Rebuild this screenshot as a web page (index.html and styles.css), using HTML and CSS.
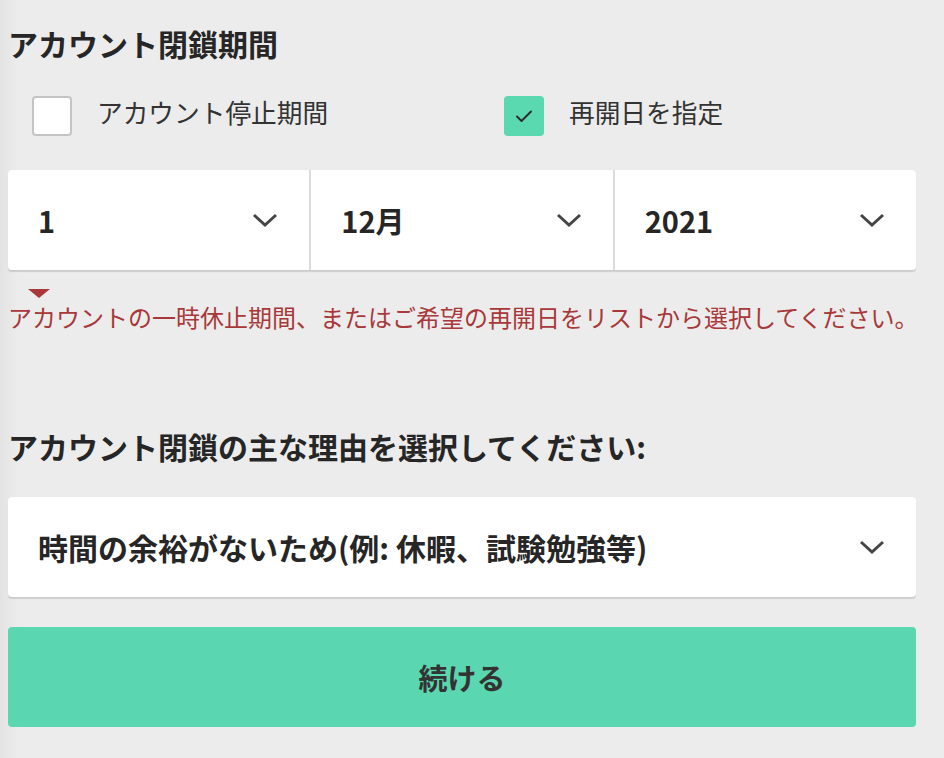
FILE: index.html
```html
<!DOCTYPE html>
<html lang="ja">
<head>
  <meta charset="UTF-8">
  <meta name="viewport" content="width=device-width, initial-scale=1.0">
  <title>アカウント閉鎖</title>
  <link rel="stylesheet" href="styles.css">
</head>
<body>
  <div class="page">
    <h2 class="heading">アカウント閉鎖期間</h2>

    <div class="check-row">
      <label class="check">
        <span class="box"></span>
        <span class="check-label">アカウント停止期間</span>
      </label>
      <label class="check">
        <span class="box checked">
          <svg width="18" height="14" viewBox="0 0 18 14"><path d="M2 7.5 L6.5 12 L16 2.5" fill="none" stroke="#2b2b2b" stroke-width="1.9" stroke-linecap="round" stroke-linejoin="round"/></svg>
        </span>
        <span class="check-label">再開日を指定</span>
      </label>
    </div>

    <div class="date-select">
      <div class="select-cell">
        <span class="value">1</span>
        <svg class="chevron" width="26" height="15" viewBox="0 0 26 15"><path d="M2 2 L13 12 L24 2" fill="none" stroke="#454545" stroke-width="3"/></svg>
      </div>
      <div class="select-cell">
        <span class="value">12月</span>
        <svg class="chevron" width="26" height="15" viewBox="0 0 26 15"><path d="M2 2 L13 12 L24 2" fill="none" stroke="#454545" stroke-width="3"/></svg>
      </div>
      <div class="select-cell">
        <span class="value">2021</span>
        <svg class="chevron" width="26" height="15" viewBox="0 0 26 15"><path d="M2 2 L13 12 L24 2" fill="none" stroke="#454545" stroke-width="3"/></svg>
      </div>
    </div>

    <div class="error">
      <span class="error-arrow"></span>
      <p class="error-text">アカウントの一時休止期間、またはご希望の再開日をリストから選択してください。</p>
    </div>

    <h2 class="heading reason-heading">アカウント閉鎖の主な理由を選択してください:</h2>

    <div class="select-cell reason-select">
      <span class="value reason-value">時間の余裕がないため(例: 休暇、試験勉強等)</span>
      <svg class="chevron" width="26" height="15" viewBox="0 0 26 15"><path d="M2 2 L13 12 L24 2" fill="none" stroke="#454545" stroke-width="3"/></svg>
    </div>

    <button class="continue" type="button">続ける</button>
  </div>
</body>
</html>
```

FILE: styles.css
```css
body {
  margin: 0;
  font-family: "Noto Sans CJK JP", "Noto Sans", sans-serif;
  color: #2a2a2a;
  background: linear-gradient(to right, #e2e3e2 0, #ebeceb 18px) #ebeceb;
  min-height: 758px;
}
.page {
  width: 908px;
  padding: 22px 0 0 8px;
}
.heading {
  margin: 0;
  font-size: 30px;
  line-height: 42px;
  font-weight: bold;
  color: #262626;
}
.check-row {
  display: grid;
  grid-template-columns: 472px 1fr;
  margin-top: 32px;
  padding-left: 24px;
}
.check {
  display: flex;
  align-items: center;
  gap: 25px;
  height: 40px;
}
.box {
  width: 36px;
  height: 36px;
  border: 2px solid #c4c4c4;
  border-radius: 4px;
  background: #fff;
  display: flex;
  align-items: center;
  justify-content: center;
}
.box.checked {
  background: #5ad8b0;
  border-color: #5ad8b0;
}
.check-label {
  font-size: 25.7px;
  line-height: 28px;
  padding-bottom: 8px;
  color: #333;
}
.date-select {
  display: grid;
  grid-template-columns: 1fr 1fr 1fr;
  gap: 2px;
  margin-top: 34px;
  background: #dcdcdc;
  border-radius: 4px;
  box-shadow: 0 2px 1px rgba(0, 0, 0, 0.13);
}
.select-cell {
  height: 100px;
  background: #fff;
  display: flex;
  align-items: center;
  justify-content: space-between;
  padding: 0 31px 0 30px;
  box-sizing: border-box;
}
.date-select .select-cell:first-child {
  border-radius: 4px 0 0 4px;
}
.date-select .select-cell:last-child {
  border-radius: 0 4px 4px 0;
}
.value {
  font-size: 29px;
  font-weight: bold;
  color: #262626;
}
.reason-value {
  font-size: 30px;
}
.chevron {
  display: block;
}
.error {
  margin-top: 19px;
}
.error-arrow {
  display: block;
  width: 0;
  height: 0;
  margin-left: 20px;
  border-left: 11px solid transparent;
  border-right: 11px solid transparent;
  border-top: 9px solid #a8383a;
}
.error-text {
  margin: 3px 0 0;
  font-size: 24px;
  line-height: 32px;
  color: #a8383a;
  white-space: nowrap;
}
.reason-heading {
  margin-top: 92px;
}
.reason-select {
  margin-top: 30px;
  border-radius: 4px;
  box-shadow: 0 2px 1px rgba(0, 0, 0, 0.13);
}
.continue {
  display: block;
  width: 100%;
  height: 100px;
  margin-top: 30px;
  border: none;
  border-radius: 4px;
  background: #5ad7b0;
  font-family: inherit;
  font-size: 29px;
  font-weight: bold;
  color: #333;
}
```
